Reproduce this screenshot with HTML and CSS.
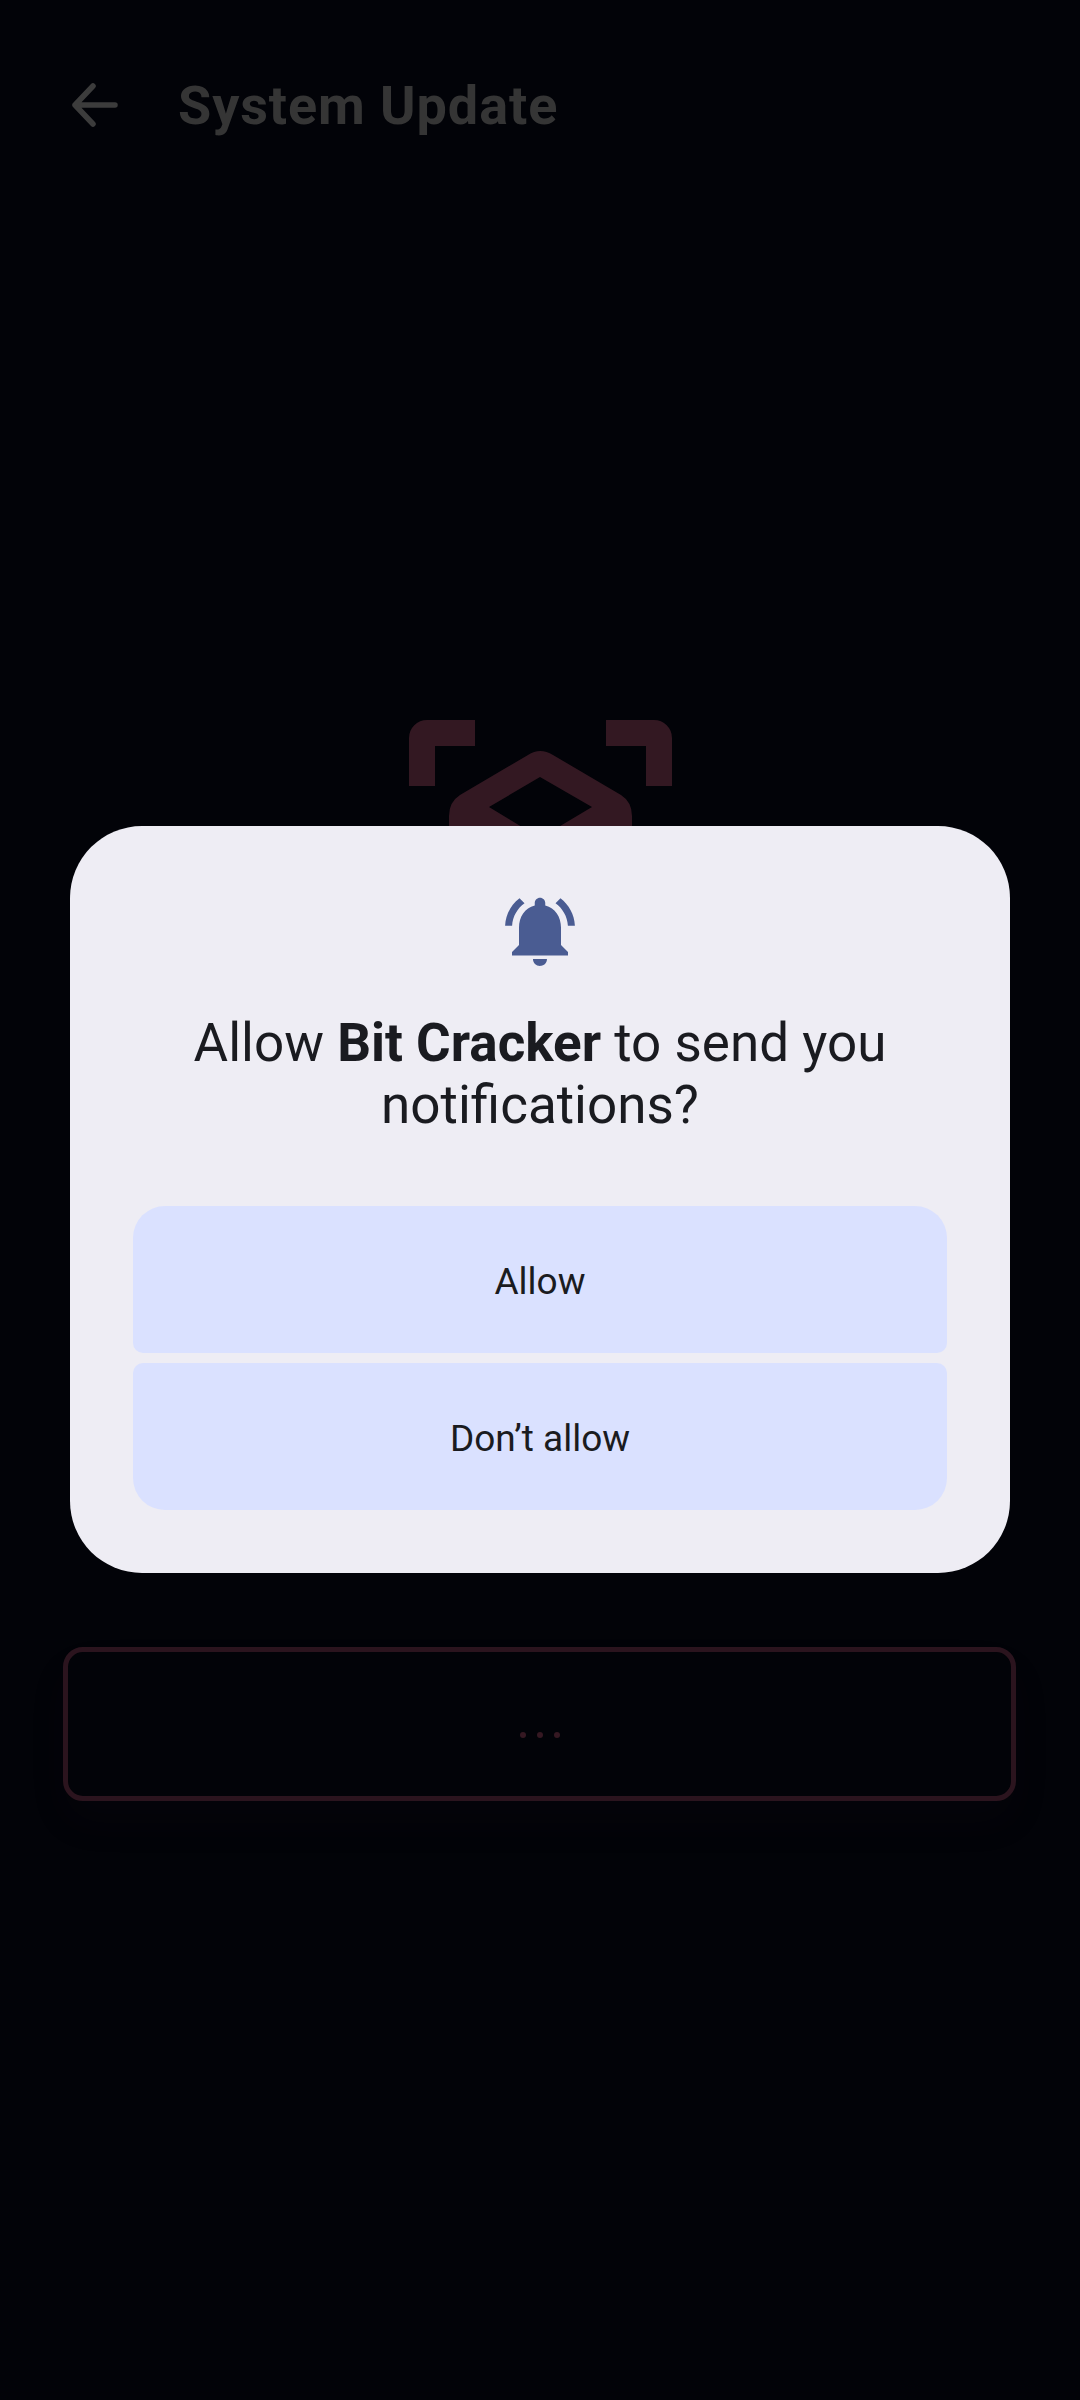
FILE: index.html
```html
<!DOCTYPE html>
<html>
<head>
	<meta charset="utf-8">
	<title>System Update</title>
	<link rel="stylesheet" href="styles.css">
</head>
<body>

<div class="screen">

	<header class="appbar">
		<svg class="back" width="48" height="44" viewBox="0 0 48 44">
			<path d="M44 22H4M22 3 4 22l18 19" fill="none" stroke="#3c3c3c" stroke-width="5.5" stroke-linecap="round" stroke-linejoin="round"/>
		</svg>
		<h1>System Update</h1>
	</header>

	<div class="scan">
		<svg width="263" height="263" viewBox="0 0 263 263">
			<path d="M66 0H18A18 18 0 0 0 0 18V66H26V26H66ZM197 0H245A18 18 0 0 1 263 18V66H237V26H197Z" fill="#331822"/>
			<path fill-rule="evenodd" d="M119 35Q131 27 144 35L212 75Q223 82 223 96V170Q223 184 212 191L144 231Q131 239 119 231L51 191Q40 184 40 170V96Q40 82 51 75ZM131 57 80 87 131 118 183 87Z" fill="#331822"/>
		</svg>
	</div>

	<button class="start"><span></span><span></span><span></span></button>

</div>

<div class="dialog">
	<svg class="bell" width="84" height="84" viewBox="0 0 24 24">
		<path d="M7.58 4.08 6.15 2.65C3.75 4.48 2.17 7.3 2.03 10.5h2c.15-2.65 1.51-4.97 3.55-6.42zM19.97 10.5h2c-.15-3.2-1.73-6.02-4.12-7.85l-1.42 1.43c2.02 1.45 3.39 3.77 3.54 6.42zM18 11c0-3.07-1.64-5.64-4.5-6.32V4c0-.83-.67-1.5-1.5-1.5s-1.5.67-1.5 1.5v.68C7.63 5.36 6 7.92 6 11v5l-2 2v1h16v-1l-2-2v-5zM12 22c.14 0 .27-.01.4-.04.65-.14 1.18-.58 1.44-1.18.1-.24.15-.5.15-.78h-4c.01 1.1.9 2 2.01 2z" fill="#4a5c92"/>
	</svg>
	<p class="message">Allow <b>Bit Cracker</b> to send you notifications?</p>
	<div class="actions">
		<button class="first">Allow</button>
		<button class="last">Don’t allow</button>
	</div>
</div>

</body>
</html>
```

FILE: styles.css
```css
html, body {
	margin: 0;
	height: 100%;
	background-color: #020308;
	font-family: Roboto, "Liberation Sans", sans-serif;
}

.screen {
	display: flex;
	flex-direction: column;
	height: 2400px;
}

.appbar {
	display: flex;
	align-items: center;
	height: 210px;
	padding-left: 71px;
	box-sizing: border-box;
}

.appbar h1 {
	margin: 0 0 0 59px;
	font-size: 54px;
	font-weight: 700;
	letter-spacing: 0.9px;
	color: #353535;
}

.scan {
	display: flex;
	justify-content: center;
	margin-top: 510px;
	height: 263px;
	margin-left: 1px;
}

.start {
	display: flex;
	align-items: center;
	justify-content: center;
	gap: 11px;
	width: 953px;
	height: 154px;
	margin: 664px 0 0 63px;
	padding: 21px 0 0 0;
	background: none;
	border: 5px solid #2b141e;
	border-radius: 20px;
	box-shadow: 0 22px 40px rgba(60, 30, 50, 0.06);
}

.start span {
	width: 6px;
	height: 6px;
	border-radius: 50%;
	background-color: #351822;
}

/* sits over the page */
.dialog {
	position: absolute;
	top: 826px;
	left: 70px;
	width: 940px;
	box-sizing: border-box;
	padding: 63px 63px 63px;
	background-color: #eeedf4;
	border-radius: 72px;
	text-align: center;
}

.bell {
	display: block;
	margin: 0 auto;
}

.message {
	margin: 39px 0 70px;
	font-size: 53px;
	line-height: 62px;
	color: #1a1b20;
}

.actions {
	display: flex;
	flex-direction: column;
	gap: 10px;
}

.actions button {
	height: 147px;
	padding: 4px 0 0;
	border: 0;
	background-color: #dae1ff;
	font-family: inherit;
	font-size: 37px;
	color: #1a1b20;
}

.first {
	border-radius: 32px 32px 10px 10px;
}

.last {
	border-radius: 10px 10px 32px 32px;
}
```
